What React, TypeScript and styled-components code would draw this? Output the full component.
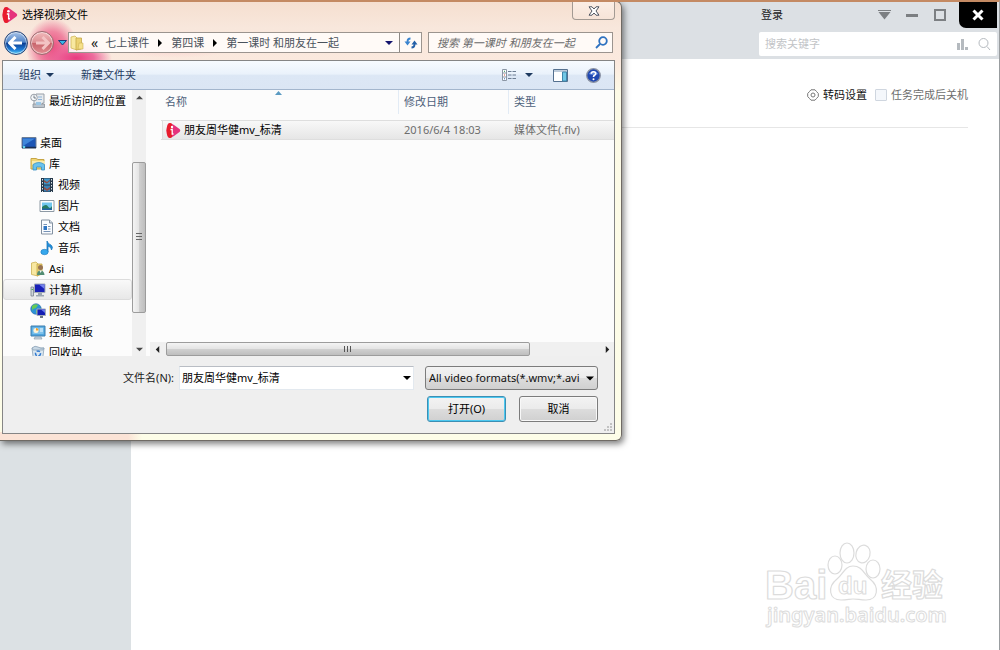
import React from "react";
import styled, { createGlobalStyle } from "styled-components";

const GlobalStyle = createGlobalStyle`
  *, *::before, *::after { box-sizing: border-box; }
  body {
    margin: 0;
    background: #fff;
    color: #1a1a1a;
    font-family: "Noto Sans", "Noto Sans CJK SC", sans-serif;
    font-size: 11px;
    line-height: 16px;
  }
  button, input, select { font: inherit; color: inherit; margin: 0; padding: 0; }
  button { background: none; border: 0; cursor: pointer; }
  svg { display: block; flex: none; }
`;

/* ---------- player window ---------- */

const Player = styled.div`
  position: relative;
  min-height: 100vh;
  display: flex;
  flex-direction: column;
  overflow: hidden;
  background: #fff;
  border-top: 2px solid #c48a63;
  border-right: 1px solid #999da0;
`;

const PlayerHeader = styled.header`
  display: flex;
  flex-direction: column;
  align-items: flex-end;
  gap: 4px;
  height: 57px;
  padding-right: 2px;
  background: #dce0e4;
`;

const WindowBar = styled.div`
  display: flex;
  align-items: stretch;
  height: 26px;
`;

const WindowButton = styled.button`
  display: flex;
  align-items: center;
  justify-content: center;
  width: 28px;
  color: #7c7f82;
`;

const LoginButton = styled.button`
  width: 28px;
  margin-right: 84px;
  color: #222;
`;

const PlayerClose = styled(WindowButton)`
  width: 38px;
  margin-left: 5px;
  background: #000;
  color: #fff;
  border-bottom-left-radius: 7px;
`;

const SearchBox = styled.form`
  display: flex;
  align-items: center;
  gap: 10px;
  width: 238px;
  height: 24px;
  padding: 0 6px;
  background: #fff;
  border-radius: 2px;
`;

const SearchInput = styled.input`
  flex: 1;
  min-width: 0;
  border: 0;
  outline: 0;
  background: transparent;
  &::placeholder { color: #c2c4c7; opacity: 1; }
`;

const PlayerBody = styled.div`
  flex: 1;
  display: flex;
`;

const Sidebar = styled.aside`
  width: 131px;
  flex: none;
  background: #dce1e4;
`;

const Workspace = styled.main`
  flex: 1;
  display: flex;
  flex-direction: column;
  justify-content: space-between;
  padding: 0 31px 20px 0;
`;

const Options = styled.div`
  display: flex;
  align-items: center;
  justify-content: flex-end;
  gap: 8px;
  height: 69px;
  padding-top: 3px;
  border-bottom: 1px solid #e6e6e6;
`;

const SettingsButton = styled.button`
  display: flex;
  align-items: center;
  gap: 4px;
  color: #111;
`;

const ShutdownLabel = styled.label`
  display: flex;
  align-items: center;
  gap: 4px;
  color: #6d6d6d;
`;

const Tick = styled.input`
  appearance: none;
  width: 12px;
  height: 12px;
  background: #f4f7fb;
  border: 1px solid #cfd6df;
  border-radius: 1px;
`;

const Watermark = styled.div`
  align-self: flex-end;
  margin-right: 21px;
`;

/* ---------- file dialog ---------- */

const Dialog = styled.section`
  position: absolute;
  top: -1px;
  left: 0;
  width: 622px;
  padding: 0 6px 6px 2px;
  border: 1px solid #6f6a64;
  border-left: 0;
  border-radius: 0 6px 6px 0;
  background:
    radial-gradient(ellipse 36px 16px at 76px 56px, #e93a80 0%, #ec5f96e6 50%, #f6e4d900 100%),
    radial-gradient(ellipse 26px 30px at 52px 46px, #ea4b7d 0%, #ee7496d9 55%, #f6e4d900 100%),
    radial-gradient(ellipse 60px 10px at 175px 46px, #f9d3d0 0%, #f6e4d900 100%),
    linear-gradient(90deg, #fbe3d6 0, #fbe3d6 128px, #fdfde8 142px, #fdfde8 100%) bottom / 100% 8px no-repeat,
    linear-gradient(180deg, #f5dfd0 0, #f8e7dc 26px, #fbe9de 60px, #fdfae6 90px, #fdfde8 100%);
  box-shadow: 2px 3px 6px #00000080;
`;

const TitleBar = styled.div`
  display: flex;
  align-items: flex-start;
  justify-content: space-between;
  height: 28px;
`;

const Title = styled.h1`
  display: flex;
  align-items: center;
  gap: 4px;
  height: 26px;
  margin: 0;
  font-size: 11px;
  font-weight: 400;
  color: #000;
`;

const DialogClose = styled.button`
  display: flex;
  align-items: center;
  justify-content: center;
  width: 43px;
  height: 18px;
  border: 1px solid #a39a93;
  border-top: 0;
  border-radius: 0 0 4px 4px;
  background: linear-gradient(#fbeee5, #f7e4d8);
`;

const AddressRow = styled.div`
  display: flex;
  align-items: center;
  height: 25px;
  margin-bottom: 5px;
  padding: 0 2px;
`;

const RoundButton = styled.button<{ $forward?: boolean }>`
  display: flex;
  align-items: center;
  justify-content: center;
  width: 24px;
  height: 24px;
  margin-right: 2px;
  border-radius: 50%;
  border: 1px solid ${(p) => (p.$forward ? "#9b6b70" : "#2a4676")};
  background: ${(p) =>
    p.$forward
      ? "linear-gradient(#f2b9bb 0, #dc8f93 48%, #c8656c 52%, #e38d92 100%)"
      : "linear-gradient(#a9c4e8 0, #4f83c8 46%, #0d3f94 52%, #1d7bd6 80%, #5fd0f8 100%)"};
  box-shadow: inset 0 0 0 1px #ffffff80;
`;

const HistoryButton = styled.button`
  display: flex;
  align-items: center;
  justify-content: center;
  width: 12px;
  height: 20px;
`;

const AddressBar = styled.nav`
  display: flex;
  align-items: center;
  flex: 1;
  height: 21px;
  margin-right: 6px;
  border: 1px solid #9b948f;
  background: #fffcf9e6;
`;

const CrumbLead = styled.span`
  margin-left: 6px;
  font-size: 14px;
  color: #222;
`;

const Crumb = styled.button`
  padding: 0 7px;
  color: #4a525c;
`;

const BarButton = styled.button<{ $divider?: boolean }>`
  display: flex;
  align-items: center;
  justify-content: center;
  width: ${(p) => (p.$divider ? "22px" : "20px")};
  height: 19px;
  border-left: ${(p) => (p.$divider ? "1px solid #8d8884" : "0")};
`;

const Spacer = styled.span`
  flex: 1;
`;

const FolderSearch = styled.form`
  display: flex;
  align-items: center;
  width: 185px;
  height: 21px;
  padding: 0 4px 0 8px;
  border: 1px solid #9b948f;
  background: #fffcf9e6;
`;

const FolderSearchInput = styled(SearchInput)`
  font-style: italic;
  &::placeholder { color: #6b6b6b; opacity: 1; }
`;

const Client = styled.div`
  border: 1px solid #858585;
  background: #efefef;
`;

const Toolbar = styled.div`
  display: flex;
  align-items: center;
  height: 29px;
  padding: 0 13px 0 16px;
  border-bottom: 1px solid #a3b6cd;
  background: linear-gradient(#f7fbff 0, #eaf2fb 46%, #dce7f5 52%, #dbe6f4 100%);
  color: #1e3a5f;
`;

const ToolButton = styled.button`
  display: flex;
  align-items: center;
  gap: 5px;
  margin-right: 27px;
`;

const ToolIcons = styled.div`
  display: flex;
  align-items: center;
  margin-left: auto;
`;

const ToolIcon = styled.button<{ $gap?: number }>`
  margin-left: ${(p) => p.$gap ?? 0}px;
`;

const Browser = styled.div`
  display: flex;
  height: 266px;
  background: #fcfcfc;
`;

const Tree = styled.ul`
  flex: none;
  width: 129px;
  height: 266px;
  margin: 0;
  padding: 0;
  overflow: hidden;
  list-style: none;
`;

const TreeRow = styled.li<{ $level: number; $selected?: boolean; $space?: boolean }>`
  display: flex;
  align-items: center;
  gap: 3px;
  height: 21px;
  margin-bottom: ${(p) => (p.$space ? 21 : 0)}px;
  padding-left: ${(p) => 17 + 9 * p.$level}px;
  white-space: nowrap;
  color: #000;
  border: 1px solid ${(p) => (p.$selected ? "#dcdcdc" : "transparent")};
  border-radius: 3px;
  background: ${(p) => (p.$selected ? "linear-gradient(#f9f9f9, #e8e8e8)" : "none")};
`;

const Track = styled.div<{ $across?: boolean }>`
  display: flex;
  flex-direction: ${(p) => (p.$across ? "row" : "column")};
  flex: none;
  width: ${(p) => (p.$across ? "auto" : "14px")};
  height: ${(p) => (p.$across ? "14px" : "auto")};
  background: #f0f0f0;
`;

const TrackButton = styled.button`
  display: flex;
  align-items: center;
  justify-content: center;
  flex: none;
  width: 16px;
  height: 14px;
  margin: 0 -1px;
`;

const Thumb = styled.div<{ $across?: boolean }>`
  display: flex;
  align-items: center;
  justify-content: center;
  flex: ${(p) => (p.$across ? "363" : "151")};
  border: 1px solid #9c9c9c;
  border-radius: 2px;
  background: linear-gradient(${(p) => (p.$across ? "180deg" : "90deg")}, #f4f4f4 0, #e4e4e4 48%, #cfcfcf 54%, #bebebe 100%);
`;

const TrackGap = styled.span<{ $weight: number }>`
  flex: ${(p) => p.$weight};
`;

const FilePane = styled.div`
  flex: 1;
  display: flex;
  flex-direction: column;
  justify-content: space-between;
  min-width: 0;
  margin-left: 4px;
`;

const FileTable = styled.table`
  width: 100%;
  table-layout: fixed;
  border-collapse: separate;
  border-spacing: 0;
`;

const HeadCell = styled.th<{ $width?: number }>`
  position: relative;
  width: ${(p) => (p.$width ? `${p.$width}px` : "auto")};
  height: 24px;
  padding: 0 0 0 5px;
  text-align: left;
  font-weight: 400;
  color: #4c607a;
  border-left: 1px solid #e2ebf5;
  &:first-child { padding-left: 15px; border-left: 0; }
`;

const SortMark = styled.svg`
  position: absolute;
  top: 1px;
  left: 125px;
`;

const GapRow = styled.tr`
  height: 6px;
`;

const FileCell = styled.td`
  height: 20px;
  padding: 0 0 0 6px;
  white-space: nowrap;
  color: #6d6d6d;
  border-top: 1px solid #dedede;
  border-bottom: 1px solid #dedede;
  background: linear-gradient(#f8f8f8, #e6e6e6);
`;

const NameCell = styled(FileCell)`
  padding: 0 0 0 12px;
  color: #000;
  background: linear-gradient(#f8f8f8, #e6e6e6) 12px 0 no-repeat;
  border-image: linear-gradient(90deg, transparent 12px, #dedede 12px) 1;
`;

const FileName = styled.span`
  display: flex;
  align-items: center;
  gap: 3px;
  height: 18px;
  padding-left: 3px;
  border-left: 1px solid #dedede;
`;

const Footer = styled.form`
  position: relative;
  display: flex;
  flex-direction: column;
  gap: 6px;
  height: 77px;
  padding: 10px 16px 0 0;
`;

const FooterRow = styled.div<{ $gap: number }>`
  display: flex;
  align-items: center;
  justify-content: flex-end;
  gap: ${(p) => p.$gap}px;
`;

const NameBox = styled.div`
  display: flex;
  align-items: center;
  width: 235px;
  height: 24px;
  margin-right: 6px;
  padding-left: 2px;
  border: 1px solid #e3e9ef;
  border-top-color: #b9bdc4;
  background: #fff;
`;

const NameInput = styled(SearchInput)`
  color: #000;
`;

const TypeBox = styled.div`
  position: relative;
  width: 173px;
`;

const TypeSelect = styled.select`
  appearance: none;
  display: block;
  width: 100%;
  height: 24px;
  padding: 0 16px 0 3px;
  color: #111;
  border: 1px solid #7c7c7c;
  border-radius: 3px;
  background: linear-gradient(#f3f3f3 0, #ebebeb 48%, #dcdcdc 52%, #d0d0d0 100%);
`;

const TypeArrow = styled.svg`
  position: absolute;
  top: 10px;
  right: 4px;
  pointer-events: none;
`;

const PushButton = styled.button<{ $primary?: boolean }>`
  width: 79px;
  height: 26px;
  color: #000;
  border: 1px solid ${(p) => (p.$primary ? "#3c8fb4" : "#7c7c7c")};
  border-radius: 3px;
  background: linear-gradient(#f3f3f3 0, #ebebeb 48%, #dcdcdc 52%, #d0d0d0 100%);
  box-shadow: inset 0 0 0 1px ${(p) => (p.$primary ? "#4cc8f0" : "#f8f8f8")};
`;

const Grip = styled.svg`
  position: absolute;
  right: 2px;
  bottom: 2px;
`;

/* ---------- drawings ---------- */

type Way = "down" | "up" | "left" | "right";
const ARROWS: Record<Way, string> = {
  down: "M0 2h8l-4 4z",
  up: "M0 6h8l-4-4z",
  left: "M6 0v8l-4-4z",
  right: "M2 0v8l4-4z",
};

const Arrow = ({ way, size = 8, color = "#222" }: { way: Way; size?: number; color?: string }) => (
  <svg width={size} height={size} viewBox="0 0 8 8" aria-hidden="true">
    <path d={ARROWS[way]} fill={color} />
  </svg>
);

const AppLogo = ({ size = 15 }: { size?: number }) => (
  <svg width={size} height={size} viewBox="0 0 15 15" aria-hidden="true">
    <path d="M2 1Q4-1 8 2L13.500 6Q15 7.500 13.500 9L8 13Q4 16 2 14Q-1 7.500 2 1Z" fill="#e5327c" />
    <path d="M2 1Q4-1 6 1V14Q4 16 2 14Q-1 7.500 2 1Z" fill="#e81c2b" />
    <circle cx="6" cy="4" r="1.200" fill="#fff" />
    <path d="M4.500 6.500H6.200V11H7.500" stroke="#fff" strokeWidth="1.300" fill="none" />
  </svg>
);

const NavArrow = ({ back }: { back?: boolean }) => (
  <svg width="16" height="14" viewBox="0 0 16 14" aria-hidden="true">
    <path
      d={back ? "M7.500 1L1.500 7L7.500 13M2 7H14" : "M8.500 1L14.500 7L8.500 13M14 7H2"}
      fill="none"
      stroke={back ? "#fff" : "#f3c3c4"}
      strokeWidth="3"
    />
  </svg>
);

const FolderIcon = () => (
  <svg width="16" height="16" viewBox="0 0 16 16" aria-hidden="true">
    <path d="M2 2L6 1L8 3V15L2 13Z" fill="#f8e8a0" stroke="#d3b95c" strokeWidth=".8" />
    <path d="M7 3H12.500V14L7 15Z" fill="#ecd272" stroke="#c5a748" strokeWidth=".8" />
    <path d="M10 8H14V14H9Z" fill="#f6e08b" stroke="#cdb154" strokeWidth=".6" />
  </svg>
);

const TREE_ART: Record<string, React.ReactNode> = {
  recent: (
    <>
      <path d="M6 1H14V10H12.500V14H4V6Z" fill="#e6eaee" stroke="#9aa0a8" />
      <path d="M8 4H12M8 6.500H12" stroke="#8fb3d6" />
      <path d="M3 11H14.500V14.500H3Z" fill="#bcc4cc" stroke="#8b929a" strokeWidth=".8" />
      <path d="M6 9H11V12H6Z" fill="#9cc6e4" />
      <circle cx="4" cy="4.500" r="3.300" fill="#f6f8fa" stroke="#9aa0a8" />
      <path d="M4 2.500V5H6" stroke="#56606c" fill="none" strokeWidth=".8" />
    </>
  ),
  desktop: (
    <>
      <path d="M1 2.500H15V13H1Z" fill="#1c55b5" stroke="#6d7f96" />
      <path d="M2 3.500H14L2 11Z" fill="#3f86da" />
      <path d="M1 12.500H15" stroke="#1a2e50" strokeWidth="1.500" />
      <circle cx="3" cy="12" r="1.300" fill="#5cd0ea" />
    </>
  ),
  library: (
    <>
      <path d="M1 2.500H6L8 3.500H14V13H1Z" fill="#f2d675" stroke="#c6a544" />
      <path d="M2 5H15V9H2Z" fill="#f9ebae" />
      <path d="M3 14V8.500Q9 4.500 14.500 8.500V14H11.500V11H6.500V14Z" fill="#69c2ee" stroke="#3990c4" strokeWidth=".8" />
    </>
  ),
  video: (
    <>
      <path d="M2 1H14V15H2Z" fill="#26384a" />
      <path d="M5 1.500H11V7.500H5Z" fill="#3f96cb" />
      <path d="M5 8.500H11V14.500H5Z" fill="#3b82b8" />
      <path d="M5 3L8 5L11 2.500V4L8 6.500L5 5ZM5 10L8 12L11 10V12L8 14L5 12Z" fill="#954d43" />
      <path d="M3.500 2V15M12.500 2V15" stroke="#dce5ea" strokeDasharray="1.500 1.500" />
    </>
  ),
  picture: (
    <>
      <path d="M1 2.500H15V13.500H1Z" fill="#fdfdfd" stroke="#8e9aa5" />
      <path d="M3 4.500H13V11.500H3Z" fill="#72c7ee" />
      <path d="M3 9Q7 5.500 9 8.500T13 8V11.500H3Z" fill="#277c62" />
      <path d="M3 10.500H13V12H3Z" fill="#2162a5" />
    </>
  ),
  document: (
    <>
      <path d="M2.500 1H10.500L13.500 4V15H2.500Z" fill="#fafcff" stroke="#8290a0" />
      <path d="M10.500 1V4H13.500" fill="#d3dce6" stroke="#8290a0" />
      <path d="M4.500 5.500H8M4.500 12.500H11.500M9 7.500H11.500M9 10H11.500" stroke="#7793b6" />
      <path d="M4.500 7H8V11H4.500Z" fill="#2e76c4" />
    </>
  ),
  music: (
    <>
      <path d="M8 1Q9 4 12 5Q14.500 7 12.500 10Q12.500 7 9 6V12Q8 10 8 12Z" fill="#2490dc" stroke="#1b78be" strokeWidth=".8" />
      <ellipse cx="5.500" cy="12" rx="3.700" ry="2.700" fill="#36a7ec" stroke="#1b78be" strokeWidth=".6" />
    </>
  ),
  user: (
    <>
      <path d="M1.500 2L6 1L8 3V15L1.500 13.500Z" fill="#f8e8a0" stroke="#cdb154" strokeWidth=".8" />
      <path d="M7 3H12V13L7 15Z" fill="#e9cf70" stroke="#c5a748" strokeWidth=".8" />
      <circle cx="10.500" cy="6.500" r="2.500" fill="#987350" />
      <path d="M7 14Q7 9.500 10.500 9.500T14.500 14Z" fill="#528d73" />
      <path d="M9.500 9.500H12L10.500 12Z" fill="#f4f4f4" />
    </>
  ),
  computer: (
    <>
      <path d="M1 5H3.500V14H1Z" fill="#cfd5da" stroke="#7a848f" strokeWidth=".8" />
      <path d="M4.500 2H15V10.500H4.500Z" fill="#1921b7" stroke="#a4adb8" />
      <path d="M9 2.500H14.500V7Z" fill="#7482ed" />
      <path d="M8 11H12V13H14V14.500H6V13H8Z" fill="#9ba6b2" />
      <path d="M1.500 7.500H3" stroke="#4bb552" />
    </>
  ),
  network: (
    <>
      <circle cx="6" cy="6" r="5.300" fill="#2b92d8" stroke="#3069a4" strokeWidth=".6" />
      <path d="M2 3Q5 0 8 2L6 5L3 6L2 8ZM6 7L8 8L6 11Z" fill="#65ca56" />
      <path d="M7 6H15.500V12.500H7Z" fill="#141eb3" stroke="#a4adb8" />
      <path d="M11 6.500H15V10Z" fill="#6b7cf0" />
      <path d="M10 13H13V15H10Z" fill="#6c7784" />
    </>
  ),
  control: (
    <>
      <path d="M1 2H15V12H1Z" fill="#50a6df" stroke="#3f7fae" />
      <path d="M2.500 3.500H13.500V10H2.500Z" fill="#7fc3ec" />
      <circle cx="6" cy="6.500" r="2.500" fill="#fff4d8" />
      <path d="M6 6.500V4A2.500 2.500 0 0 1 8.500 6.500Z" fill="#f19d28" />
      <path d="M10 5H13M10 7H13" stroke="#f4fafe" />
      <path d="M5 13H11L12 15H4Z" fill="#d0dae3" stroke="#7c90a2" strokeWidth=".6" />
    </>
  ),
  recycle: (
    <>
      <path d="M2 3H14L12.500 15H3.500Z" fill="#dce8f1" stroke="#8ba2b6" strokeWidth=".8" />
      <path d="M2 3Q5 0 8 2T14 3L13 5H3Z" fill="#c8d8e5" stroke="#8ba2b6" strokeWidth=".8" />
      <circle cx="8" cy="8.500" r="2.500" fill="none" stroke="#347bd0" strokeWidth="1.500" strokeDasharray="3.500 1.500" />
    </>
  ),
};

const TreeIcon = ({ name }: { name: string }) => (
  <svg width="16" height="16" viewBox="0 0 16 16" aria-hidden="true">
    {TREE_ART[name]}
  </svg>
);

const SearchGlass = ({ color, width, flip }: { color: string; width: number; flip?: boolean }) => (
  <svg width="13" height="13" viewBox="0 0 13 13" aria-hidden="true">
    <circle cx={flip ? 8 : 5.5} cy="5" r={flip ? 3.8 : 4.5} fill="none" stroke={color} strokeWidth={width} />
    <path d={flip ? "M5 8L1 12" : "M9 8.500L12 12"} stroke={color} strokeWidth={width} />
  </svg>
);

const BaiduMark = () => (
  <svg width="184" height="96" viewBox="0 0 184 96" role="img" aria-label="Baidu">
    <g fill="#fff" stroke="#dcdcdc" strokeWidth="1.200" strokeLinejoin="round">
      <ellipse cx="72" cy="31" rx="7" ry="9" />
      <ellipse cx="84" cy="19" rx="7" ry="10" />
      <ellipse cx="100" cy="20" rx="7" ry="9" transform="rotate(15 100 20)" />
      <ellipse cx="110" cy="35" rx="7" ry="9" />
      <path d="M90 32C82 32 80 40 74 45C64 53 66 66 78 66C85 66 86 65 90 65C95 65 97 66 103 66C115 66 117 53 107 45C101 40 99 32 90 32Z" />
      <g fontFamily='"Liberation Sans", sans-serif' fontWeight="700">
        <text x="2" y="65" fontSize="40">Bai</text>
        <text x="75" y="60" fontSize="24" strokeWidth="1">du</text>
        <text x="4" y="88" fontSize="20" fontFamily='"Noto Sans", sans-serif' fontWeight="600" strokeWidth="1">jingyan.baidu.com</text>
      </g>
      <text x="118" y="62" fontSize="31" fontFamily='"Noto Sans CJK SC", sans-serif' fontWeight="700">经验</text>
    </g>
  </svg>
);

/* ---------- content ---------- */

type Place = { label: string; icon: string; level: number; selected?: boolean; space?: boolean };

const PLACES: Place[] = [
  { label: "最近访问的位置", icon: "recent", level: 1, space: true },
  { label: "桌面", icon: "desktop", level: 0 },
  { label: "库", icon: "library", level: 1 },
  { label: "视频", icon: "video", level: 2 },
  { label: "图片", icon: "picture", level: 2 },
  { label: "文档", icon: "document", level: 2 },
  { label: "音乐", icon: "music", level: 2 },
  { label: "Asi", icon: "user", level: 1 },
  { label: "计算机", icon: "computer", level: 1, selected: true },
  { label: "网络", icon: "network", level: 1 },
  { label: "控制面板", icon: "control", level: 1 },
  { label: "回收站", icon: "recycle", level: 1 },
];

const CRUMBS = ["七上课件", "第四课", "第一课时 和朋友在一起"];

const Crumbs = () => (
  <>
    <CrumbLead>«</CrumbLead>
    {CRUMBS.map((c, i) => (
      <React.Fragment key={c}>
        {i > 0 && <Arrow way="right" color="#000" />}
        <Crumb type="button">{c}</Crumb>
      </React.Fragment>
    ))}
  </>
);

const FileDialog = () => (
  <Dialog role="dialog" aria-label="选择视频文件">
    <TitleBar>
      <Title>
        <AppLogo size={16} />
        选择视频文件
      </Title>
      <DialogClose type="button" aria-label="关闭">
        <svg width="12" height="10" viewBox="0 0 12 10" aria-hidden="true">
          <path d="M1 .8H4L6 3L8 .8H11L8 5L11 9.200H8L6 7L4 9.200H1L4 5Z" fill="#fff" stroke="#4f5560" />
        </svg>
      </DialogClose>
    </TitleBar>

    <AddressRow>
      <RoundButton type="button" aria-label="后退">
        <NavArrow back />
      </RoundButton>
      <RoundButton type="button" $forward aria-label="前进">
        <NavArrow />
      </RoundButton>
      <HistoryButton type="button" aria-label="历史">
        <svg width="9" height="6" viewBox="0 0 9 6" aria-hidden="true">
          <path d="M.5.500H8.500L4.500 5Z" fill="#38b6e6" stroke="#203a78" />
        </svg>
      </HistoryButton>
      <AddressBar aria-label="地址">
        <FolderIcon />
        <Crumbs />
        <Spacer />
        <BarButton type="button" aria-label="展开地址">
          <Arrow way="down" color="#14146e" />
        </BarButton>
        <BarButton type="button" $divider aria-label="刷新">
          <svg width="14" height="12" viewBox="0 0 14 12" aria-hidden="true">
            <path d="M6.500 1.500Q3.500 1.500 3.500 4.500V5" fill="none" stroke="#3a84cf" strokeWidth="1.800" />
            <path d="M.5 4.500H6.500L3.500 8.500Z" fill="#3a84cf" />
            <path d="M7.500 10.500Q10.500 10.500 10.500 7.500V7" fill="none" stroke="#2460a8" strokeWidth="1.800" />
            <path d="M7.500 7.500H13.500L10.500 3.500Z" fill="#2460a8" />
          </svg>
        </BarButton>
      </AddressBar>
      <FolderSearch>
        <FolderSearchInput aria-label="搜索文件夹" placeholder="搜索 第一课时 和朋友在一起" />
        <SearchGlass color="#2f72c0" width={1.8} flip />
      </FolderSearch>
    </AddressRow>

    <Client>
      <Toolbar>
        <ToolButton type="button">
          组织
          <Arrow way="down" color="#1e3a5f" />
        </ToolButton>
        <ToolButton type="button">新建文件夹</ToolButton>
        <ToolIcons>
          <ToolIcon type="button" aria-label="更改视图">
            <svg width="15" height="12" viewBox="0 0 15 12" aria-hidden="true">
              <path d="M.5.500H4.500V11.500H.5ZM.5 4H4.500M.5 8H4.500" fill="#fff" stroke="#8b96a5" />
              <path d="M2 2.300H3" stroke="#2f9d57" />
              <path d="M2 6H3" stroke="#d84a3a" />
              <path d="M2 9.800H3" stroke="#2f6fc0" />
              <path d="M6 2.500H14M6 6H14M6 9.500H14" stroke="#6c7d92" strokeDasharray="3.500 1" />
            </svg>
          </ToolIcon>
          <ToolIcon type="button" $gap={8} aria-label="视图选项">
            <Arrow way="down" color="#1e3a5f" />
          </ToolIcon>
          <ToolIcon type="button" $gap={20} aria-label="预览窗格">
            <svg width="15" height="13" viewBox="0 0 15 13" aria-hidden="true">
              <path d="M.5.500H14.500V12.500H.5Z" fill="#fff" stroke="#54708f" />
              <path d="M1 2H14" stroke="#7e9ab8" />
              <path d="M9.500 3H13.500V12H9.500Z" fill="#72c8e6" stroke="#3e88ad" />
            </svg>
          </ToolIcon>
          <ToolIcon type="button" $gap={18} aria-label="帮助">
            <svg width="15" height="15" viewBox="0 0 15 15" aria-hidden="true">
              <circle cx="7.500" cy="7.500" r="6.800" fill="#2048b0" stroke="#8b93a3" strokeWidth="1.300" />
              <path d="M2.500 6Q7.500 0 12.500 6Q7.500 8 2.500 6Z" fill="#5d87dc" />
              <path d="M5.300 5.700Q5.300 3.700 7.500 3.700T9.700 5.700Q9.700 6.700 8.500 7.300Q7.500 7.900 7.500 9" fill="none" stroke="#fff" strokeWidth="1.600" />
              <circle cx="7.500" cy="11.200" r="1" fill="#fff" />
            </svg>
          </ToolIcon>
        </ToolIcons>
      </Toolbar>

      <Browser>
        <Tree>
          {PLACES.map((p) => (
            <TreeRow key={p.label} $level={p.level} $selected={p.selected} $space={p.space}>
              <TreeIcon name={p.icon} />
              {p.label}
            </TreeRow>
          ))}
        </Tree>
        <Track>
          <TrackButton type="button" aria-label="向上滚动">
            <Arrow way="up" size={7} color="#4a4a4a" />
          </TrackButton>
          <TrackGap $weight={58} />
          <Thumb>
            <svg width="6" height="8" viewBox="0 0 6 8" aria-hidden="true">
              <path d="M0 .5H6M0 3.500H6M0 6.500H6" stroke="#666" />
            </svg>
          </Thumb>
          <TrackGap $weight={29} />
          <TrackButton type="button" aria-label="向下滚动">
            <Arrow way="down" size={7} color="#4a4a4a" />
          </TrackButton>
        </Track>
        <FilePane>
          <FileTable>
            <thead>
              <tr>
                <HeadCell $width={248}>
                  名称
                  <SortMark width="7" height="4" viewBox="0 0 7 4" aria-hidden="true">
                    <path d="M0 4L3.500 0L7 4Z" fill="#5a9ac2" />
                  </SortMark>
                </HeadCell>
                <HeadCell $width={110}>修改日期</HeadCell>
                <HeadCell>类型</HeadCell>
              </tr>
            </thead>
            <tbody>
              <GapRow aria-hidden="true" />
              <tr>
                <NameCell>
                  <FileName>
                    <AppLogo />
                    朋友周华健mv_标清
                  </FileName>
                </NameCell>
                <FileCell>2016/6/4 18:03</FileCell>
                <FileCell>媒体文件(.flv)</FileCell>
              </tr>
            </tbody>
          </FileTable>
          <Track $across>
            <TrackButton type="button" aria-label="向左滚动">
              <Arrow way="left" size={7} />
            </TrackButton>
            <TrackGap $weight={2} />
            <Thumb $across>
              <svg width="8" height="6" viewBox="0 0 8 6" aria-hidden="true">
                <path d="M.5 0V6M3.500 0V6M6.500 0V6" stroke="#555" />
              </svg>
            </Thumb>
            <TrackGap $weight={70} />
            <TrackButton type="button" aria-label="向右滚动">
              <Arrow way="right" size={7} />
            </TrackButton>
          </Track>
        </FilePane>
      </Browser>

      <Footer>
        <FooterRow $gap={5}>
          <label htmlFor="file-name">文件名(N):</label>
          <NameBox>
            <NameInput id="file-name" defaultValue="朋友周华健mv_标清" />
            <Arrow way="down" color="#000" />
            <TrackGapEnd />
          </NameBox>
          <TypeBox>
            <TypeSelect aria-label="文件类型">
              <option>All video formats(*.wmv;*.avi</option>
            </TypeSelect>
            <TypeArrow width="8" height="5" viewBox="0 0 8 5" aria-hidden="true">
              <path d="M0 .5H8L4 4.500Z" fill="#000" />
            </TypeArrow>
          </TypeBox>
        </FooterRow>
        <FooterRow $gap={13}>
          <PushButton type="button" $primary>
            打开(O)
          </PushButton>
          <PushButton type="button">取消</PushButton>
        </FooterRow>
        <Grip width="8" height="8" viewBox="0 0 8 8" aria-hidden="true">
          <path d="M6 0h2v2H6zM3 3h2v2H3zM6 3h2v2H6zM0 6h2v2H0zM3 6h2v2H3zM6 6h2v2H6z" fill="#c2c2c2" />
        </Grip>
      </Footer>
    </Client>
  </Dialog>
);

const TrackGapEnd = styled.span`
  width: 2px;
`;

export default function App() {
  return (
    <>
      <GlobalStyle />
      <Player>
        <PlayerHeader>
          <WindowBar>
            <LoginButton type="button">登录</LoginButton>
            <WindowButton type="button" aria-label="菜单">
              <svg width="13" height="10" viewBox="0 0 13 10" aria-hidden="true">
                <path d="M0 .5H13" stroke="currentColor" />
                <path d="M.5 2H12.500L6.500 9.500Z" fill="currentColor" />
              </svg>
            </WindowButton>
            <WindowButton type="button" aria-label="最小化">
              <svg width="12" height="3" viewBox="0 0 12 3" aria-hidden="true">
                <path d="M0 1.500H12" stroke="currentColor" strokeWidth="3" />
              </svg>
            </WindowButton>
            <WindowButton type="button" aria-label="最大化">
              <svg width="12" height="12" viewBox="0 0 12 12" aria-hidden="true">
                <path d="M1 1H11V11H1Z" fill="none" stroke="currentColor" strokeWidth="2" />
              </svg>
            </WindowButton>
            <PlayerClose type="button" aria-label="关闭">
              <svg width="12" height="12" viewBox="0 0 12 12" aria-hidden="true">
                <path d="M1.500 1.500L10.500 10.500M10.500 1.500L1.500 10.500" stroke="currentColor" strokeWidth="3" />
              </svg>
            </PlayerClose>
          </WindowBar>
          <SearchBox>
            <SearchInput aria-label="搜索" placeholder="搜索关键字" />
            <svg width="11" height="11" viewBox="0 0 11 11" aria-hidden="true">
              <path d="M0 4H3V11H0ZM4 0H7V11H4ZM8 8H11V11H8Z" fill="#b5babf" />
            </svg>
            <SearchGlass color="#b5babf" width={1} />
          </SearchBox>
        </PlayerHeader>
        <PlayerBody>
          <Sidebar />
          <Workspace>
            <Options>
              <SettingsButton type="button">
                <svg width="12" height="12" viewBox="0 0 12 12" aria-hidden="true">
                  <path d="M4 .8H8L9.500 2.500L11.300 4.500V7.500L9.500 9.500L8 11.200H4L2.500 9.500L.7 7.500V4.500L2.500 2.500Z" fill="none" stroke="#777" />
                  <circle cx="6" cy="6" r="2" fill="none" stroke="#777" />
                </svg>
                转码设置
              </SettingsButton>
              <ShutdownLabel>
                <Tick type="checkbox" />
                任务完成后关机
              </ShutdownLabel>
            </Options>
            <Watermark>
              <BaiduMark />
            </Watermark>
          </Workspace>
        </PlayerBody>
        <FileDialog />
      </Player>
    </>
  );
}
